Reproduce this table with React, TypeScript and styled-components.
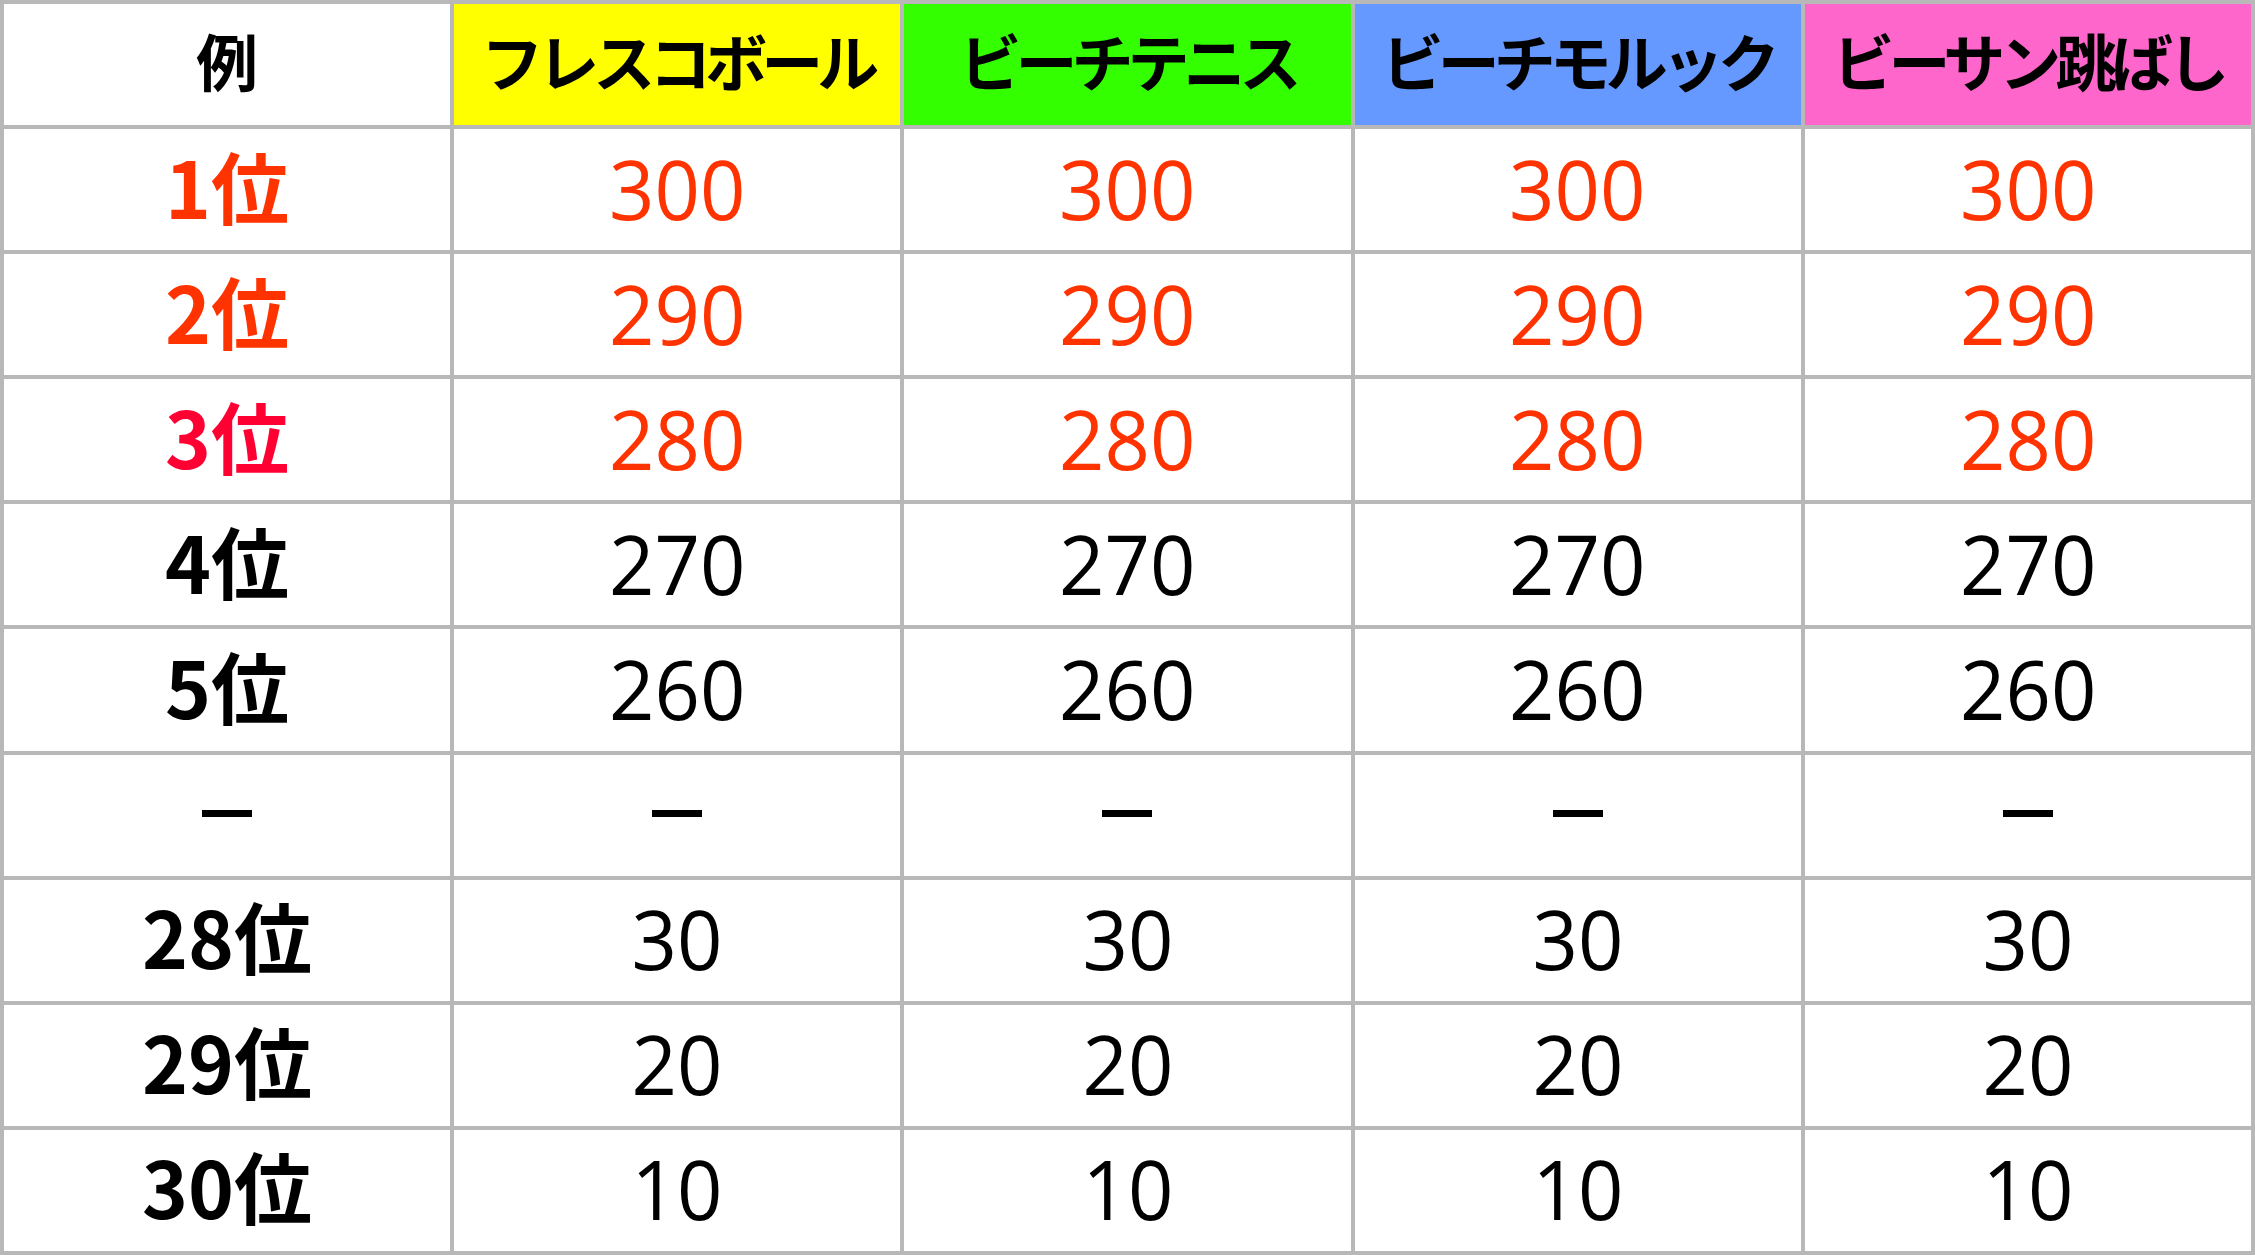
import styled, { createGlobalStyle } from 'styled-components';

const GlobalStyle = createGlobalStyle`
  html, body {
    margin: 0;
    padding: 0;
    background: #ffffff;
  }
  body {
    font-family: "Noto Sans CJK JP", "Noto Sans", sans-serif;
  }
`;

const sports = [
  { name: 'フレスコボール', bg: '#ffff00' },
  { name: 'ビーチテニス', bg: '#33ff00' },
  { name: 'ビーチモルック', bg: '#6699ff' },
  { name: 'ビーサン跳ばし', bg: '#ff66cc' },
];

const ranks = [
  { label: '1位', points: '300', rankColor: '#ff3300', pointColor: '#ff3300' },
  { label: '2位', points: '290', rankColor: '#ff3300', pointColor: '#ff3300' },
  { label: '3位', points: '280', rankColor: '#ff0033', pointColor: '#ff3300' },
  { label: '4位', points: '270', rankColor: '#000000', pointColor: '#000000' },
  { label: '5位', points: '260', rankColor: '#000000', pointColor: '#000000' },
  { label: '–', points: '–', rankColor: '#000000', pointColor: '#000000', gap: true },
  { label: '28位', points: '30', rankColor: '#000000', pointColor: '#000000' },
  { label: '29位', points: '20', rankColor: '#000000', pointColor: '#000000' },
  { label: '30位', points: '10', rankColor: '#000000', pointColor: '#000000' },
];

export default function App() {
  return (
    <>
      <GlobalStyle />
      <Table>
        <thead>
          <Row>
            <CornerCell>例</CornerCell>
            {sports.map((s) => (
              <HeaderCell key={s.name} $bg={s.bg}>
                {s.name}
              </HeaderCell>
            ))}
          </Row>
        </thead>
        <tbody>
          {ranks.map((r) => (
            <Row key={r.label + r.points}>
              <RankCell $color={r.rankColor} $gap={!!r.gap}>
                {r.gap ? <Dash /> : r.label}
              </RankCell>
              {sports.map((s) => (
                <PointCell key={s.name} $color={r.pointColor}>
                  {r.gap ? <Dash /> : <Points>{r.points}</Points>}
                </PointCell>
              ))}
            </Row>
          ))}
        </tbody>
      </Table>
    </>
  );
}

const Table = styled.table`
  width: 2255px;
  height: 1255px;
  border-collapse: collapse;
  table-layout: fixed;
  border: 4px solid #b8b8b8;
`;

const Row = styled.tr`
  height: 125px;
`;

const Cell = styled.td`
  border: 4px solid #b8b8b8;
  padding: 0 0 10px;
  text-align: center;
  vertical-align: middle;
  line-height: 1;
  white-space: nowrap;
`;

const CornerCell = styled(Cell).attrs({ as: 'th' })`
  background: #ffffff;
  color: #000000;
  font-size: 62px;
  font-weight: 700;
`;

const HeaderCell = styled(Cell).attrs({ as: 'th' })<{ $bg: string }>`
  background: ${({ $bg }) => $bg};
  color: #000000;
  font-size: 62px;
  font-weight: 700;
  letter-spacing: -6px;
`;

const RankCell = styled(Cell)<{ $color: string; $gap: boolean }>`
  color: ${({ $color }) => $color};
  font-size: 78px;
  font-weight: 700;
  padding-bottom: ${({ $gap }) => ($gap ? '4px' : '10px')};
`;

const PointCell = styled(Cell)<{ $color: string }>`
  color: ${({ $color }) => $color};
  padding: 0 0 4px;
`;

const Points = styled.span`
  display: inline-block;
  font-family: "Open Sans", "Noto Sans", sans-serif;
  font-size: 82px;
  font-weight: 400;
  transform: scaleX(0.97);
`;

const Dash = styled.span`
  display: block;
  margin: 0 auto;
  width: 50px;
  height: 7px;
  background: #000000;
`;
